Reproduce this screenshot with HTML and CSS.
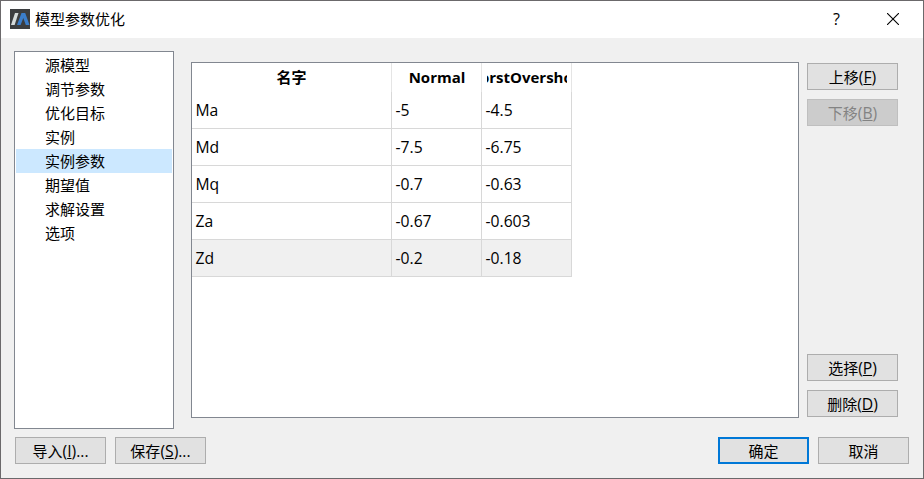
FILE: index.html
```html
<!DOCTYPE html>
<html lang="zh-CN">
<head>
<meta charset="utf-8">
<title>模型参数优化</title>
<link rel="stylesheet" href="styles.css">
</head>
<body>
<div class="window">
  <header class="titlebar">
    <svg class="logo" width="20" height="20" viewBox="0 0 20 20">
      <rect width="20" height="20" fill="#3c3e40"/>
      <path d="M1 16L5 4H8.500L4.600 16Z" fill="#d5dbdb"/>
      <path d="M7 16L11.500 4H15.200L19.500 16H15.800L13.300 9L10.600 16Z" fill="#3b7ecb"/>
    </svg>
    <h1 class="title">模型参数优化</h1>
    <span class="help">?</span>
    <svg class="close" width="12" height="12" viewBox="0 0 12 12"><path d="M0 0L12 12M12 0L0 12" stroke="#000" stroke-width="1.100"/></svg>
  </header>
  <main class="content">
    <ul class="nav">
      <li>源模型</li>
      <li>调节参数</li>
      <li>优化目标</li>
      <li>实例</li>
      <li class="selected">实例参数</li>
      <li>期望值</li>
      <li>求解设置</li>
      <li>选项</li>
    </ul>
    <section class="page">
      <div class="grid-view">
        <div class="row head"><div><span>名字</span></div><div><span>Normal</span></div><div><span>WorstOvershoot</span></div></div>
        <div class="row"><div>Ma</div><div>-5</div><div>-4.5</div></div>
        <div class="row"><div>Md</div><div>-7.5</div><div>-6.75</div></div>
        <div class="row"><div>Mq</div><div>-0.7</div><div>-0.63</div></div>
        <div class="row"><div>Za</div><div>-0.67</div><div>-0.603</div></div>
        <div class="row current"><div>Zd</div><div>-0.2</div><div>-0.18</div></div>
      </div>
      <div class="side">
        <button class="btn"><span>上移<i>(<u>F</u>)</i></span></button>
        <button class="btn" disabled><span>下移<i>(<u>B</u>)</i></span></button>
        <button class="btn push"><span>选择<i>(<u>P</u>)</i></span></button>
        <button class="btn"><span>删除<i>(<u>D</u>)</i></span></button>
      </div>
    </section>
  </main>
  <footer class="footer">
    <button class="btn"><span>导入<i>(<u>I</u>)...</i></span></button>
    <button class="btn"><span>保存<i>(<u>S</u>)...</i></span></button>
    <button class="btn primary"><span>确定</span></button>
    <button class="btn"><span>取消</span></button>
  </footer>
</div>
</body>
</html>
```
FILE: styles.css
```css
* { box-sizing: border-box; }
body {
  margin: 0;
  font: 15px/24px "Open Sans", "Noto Sans CJK SC", sans-serif;
  color: #000;
}
.window {
  display: flex;
  flex-direction: column;
  width: 924px;
  height: 479px;
  border: 1px solid #6b696b;
  background: #f0f0f0;
  overflow: hidden;
}
.titlebar {
  display: flex;
  align-items: center;
  height: 37px;
  padding: 0 24px 0 9px;
  background: #fff;
}
.logo { margin-top: -1px; }
.title {
  flex: 1;
  margin: -1px 0 0 5px;
  font-size: 15px;
  font-weight: 400;
}
.help { margin: -2px 47px 0 0; font-size: 16px; }
.close { margin-top: -1px; }
.content {
  display: flex;
  gap: 17px;
  height: 378px;
  margin: 13px 0 0 13px;
}
.nav {
  width: 160px;
  margin: 0;
  padding: 1px;
  border: 1px solid #828790;
  background: #fff;
  list-style: none;
}
.nav li { height: 24px; padding-left: 29px; }
.nav .selected { background: #cce8ff; }
.page {
  display: flex;
  gap: 8px;
  height: 356px;
  margin-top: 11px;
}
.grid-view {
  width: 608px;
  border: 1px solid #828790;
  background: #fff;
}
.row {
  display: grid;
  grid-template-columns: 200px 90px 90px;
  width: 380px;
  height: 37px;
  font-size: 15.7px;
  line-height: 35px;
}
.row div {
  padding: 1px 0 0 3.5px;
  border-right: 1px solid #d8d8d8;
  border-bottom: 1px solid #d8d8d8;
  white-space: nowrap;
}
.row.head {
  height: 29px;
  font-size: 15px;
  font-weight: 700;
  line-height: 28px;
}
.row.head div {
  padding: 0 4px;
  border-bottom: 0;
  border-color: #e5e5e5;
}
.row.head div + div { padding-left: 5px; }
.row.head span {
  display: flex;
  justify-content: center;
  overflow: hidden;
}
.row.current { background: #f0f0f0; }
.side {
  display: flex;
  flex-direction: column;
  gap: 9px;
  padding: 1px 0;
}
.push { margin-top: auto; }
.btn {
  display: flex;
  align-items: center;
  justify-content: center;
  width: 91px;
  height: 27px;
  padding: 0;
  border: 1px solid #adadad;
  background: #e1e1e1;
  color: #000;
  font: inherit;
}
.btn span { margin-top: 1px; }
.btn i { font-size: 15.7px; font-style: normal; }
.btn u { text-underline-offset: 1px; text-decoration-thickness: 1px; }
.btn:disabled { border-color: #bfbfbf; background: #ccc; color: #838383; }
.footer {
  display: flex;
  gap: 9px;
  padding: 8px 14px 0;
}
.primary { margin-left: auto; border: 2px solid #0078d7; }
```
